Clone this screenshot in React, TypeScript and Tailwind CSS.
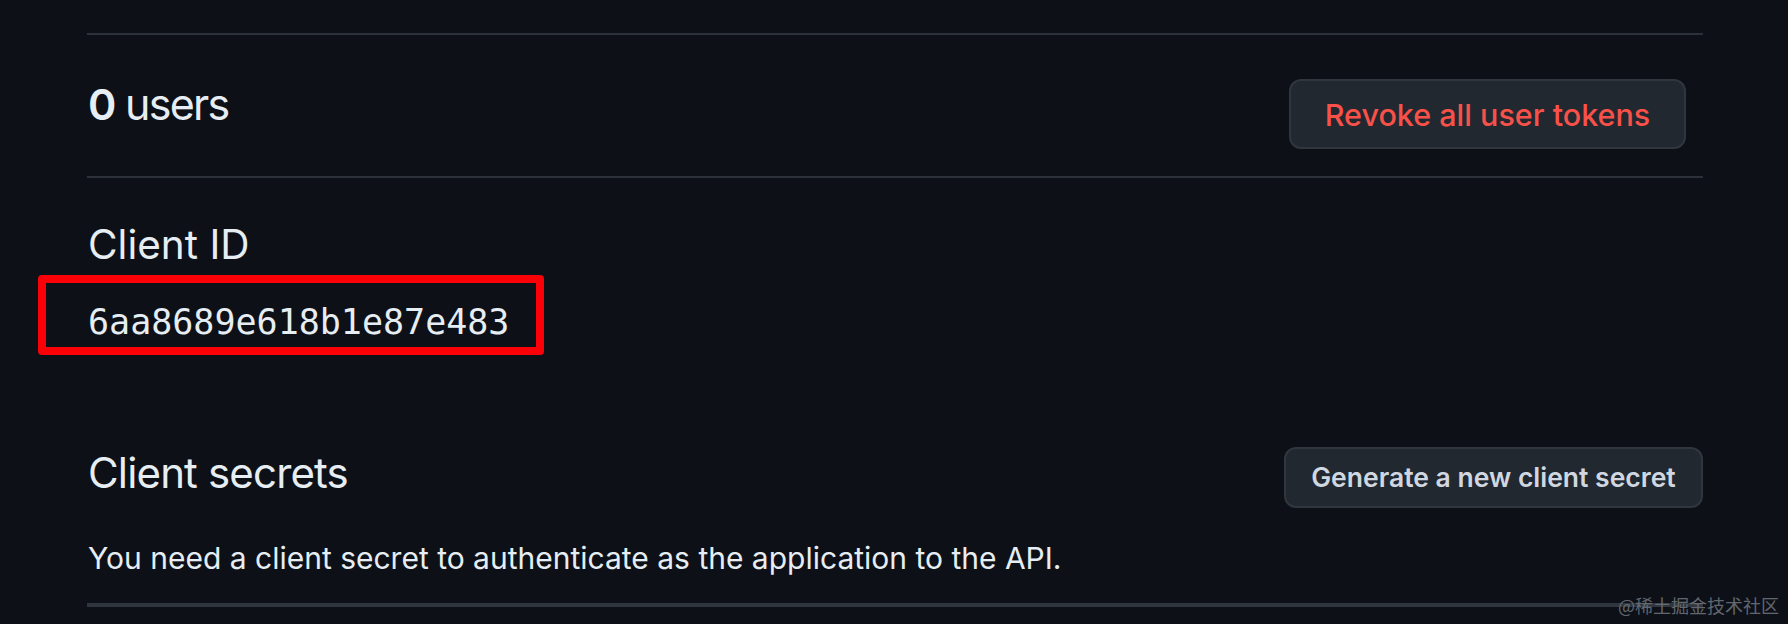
import React from "react";

export default function App() {
  return (
    <div className="relative w-[1788px] h-[624px] overflow-hidden bg-[#0d1117] font-['Inter','Liberation_Sans',sans-serif] text-[#e6edf3]">
      <div className="ml-[87px] w-[1616px] pt-[33px]">
        {/* users row */}
        <div className="h-[145px] border-t-2 border-b-2 border-[#2b3139] flex justify-between items-start">
          <h2 className="mt-[48px] ml-[1px] text-[43px] leading-[43px] font-normal tracking-[-0.04em]">
            <span className="font-semibold">0</span> users
          </h2>
          <button className="mt-[44px] mr-[17px] h-[70px] w-[397px] rounded-[12px] border-2 border-[#30363d] bg-[#212830] text-[#f85149] text-[30.5px] leading-[31px] font-medium">
            Revoke all user tokens
          </button>
        </div>

        {/* client id */}
        <h3 className="mt-[47px] ml-[1px] text-[40.5px] leading-[40.5px] font-normal">Client ID</h3>
        <div className="mt-[39px] ml-[1px]">
          <span className="relative inline-block font-['DejaVu_Sans_Mono','Liberation_Mono',monospace] text-[35px] leading-[35px] text-[#e6edf3]">
            6aa8689e618b1e87e483
            <span className="absolute left-[-50px] top-[-30px] w-[506px] h-[80px] border-[8px] border-[#fb0007] rounded-[4px]"></span>
          </span>
        </div>

        {/* client secrets */}
        <div className="mt-[107px] flex justify-between items-start">
          <div className="ml-[1px]">
            <h3 className="mt-[5px] text-[42px] leading-[42px] font-normal tracking-[-0.02em]">Client secrets</h3>
            <p className="mt-[49px] text-[30px] leading-[30px]">
              You need a client secret to authenticate as the application to the API.
            </p>
          </div>
          <button className="h-[61px] w-[419px] rounded-[12px] border-2 border-[#30363d] bg-[#212830] text-[#d1d7e0] text-[26.5px] leading-[28px] font-semibold">
            Generate a new client secret
          </button>
        </div>
        <div className="mt-[30px] h-[4px] bg-[#30363d]"></div>
      </div>

      <div className="absolute right-[9px] top-[594px] font-['Noto_Sans_CJK_SC',sans-serif] text-[18px] leading-[22px] text-[#6b7079] opacity-90">
        @稀土掘金技术社区
      </div>
    </div>
  );
}
